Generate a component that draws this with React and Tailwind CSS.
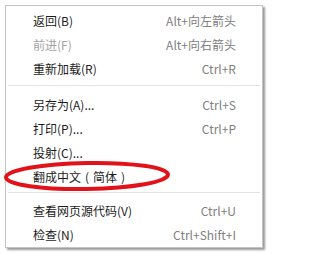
const paren = 'inline-block w-[12px] text-center';

const groups = [
  [
    { label: '返回(B)', shortcut: 'Alt+向左箭头' },
    { label: '前进(F)', shortcut: 'Alt+向右箭头', disabled: true },
    { label: '重新加载(R)', shortcut: 'Ctrl+R' },
  ],
  [
    { label: '另存为(A)...', shortcut: 'Ctrl+S' },
    { label: '打印(P)...', shortcut: 'Ctrl+P' },
    { label: '投射(C)...' },
    {
      label: (
        <>
          翻成中文<span className={paren}>(</span>简体<span className={paren}>)</span>
        </>
      ),
    },
  ],
  [
    { label: '查看网页源代码(V)', shortcut: 'Ctrl+U' },
    { label: '检查(N)', shortcut: 'Ctrl+Shift+I' },
  ],
];

function MenuRow({ label, shortcut, disabled }) {
  return (
    <div className="flex h-[24px] items-center justify-between pl-[27px] pr-[26px] text-[12px]">
      <span className={disabled ? 'text-[#a3a3a3]' : 'text-[#1c1c1c]'}>{label}</span>
      {shortcut && <span className="text-[#808080]">{shortcut}</span>}
    </div>
  );
}

export default function App() {
  return (
    <div
      className="relative h-[259px] w-[286px] bg-white pl-[5px] pt-[5px]"
      style={{ fontFamily: '"Noto Sans CJK SC", "Noto Sans", sans-serif' }}
    >
      <div className="w-[258px] border border-[#c4c4c4] bg-white pt-[3px] shadow-[2px_2px_2px_rgba(0,0,0,0.4)]">
        {groups.map((items, i) => (
          <div key={i}>
            {i === 1 && <div className="mx-[2px] mb-[7px] mt-[4px] h-px bg-[#e3e3e3]" />}
            {i === 2 && <div className="mx-[2px] mb-[6px] mt-[3px] h-px bg-[#e3e3e3]" />}
            {items.map((item, j) => (
              <MenuRow key={j} {...item} />
            ))}
          </div>
        ))}
      </div>

      {/* red annotation circle */}
      <svg className="pointer-events-none absolute left-0 top-0" width="286" height="259">
        <ellipse
          cx="87"
          cy="176"
          rx="81"
          ry="13"
          fill="none"
          stroke="#e2121b"
          strokeWidth="4"
          transform="rotate(-1 87 176)"
        />
      </svg>
    </div>
  );
}
